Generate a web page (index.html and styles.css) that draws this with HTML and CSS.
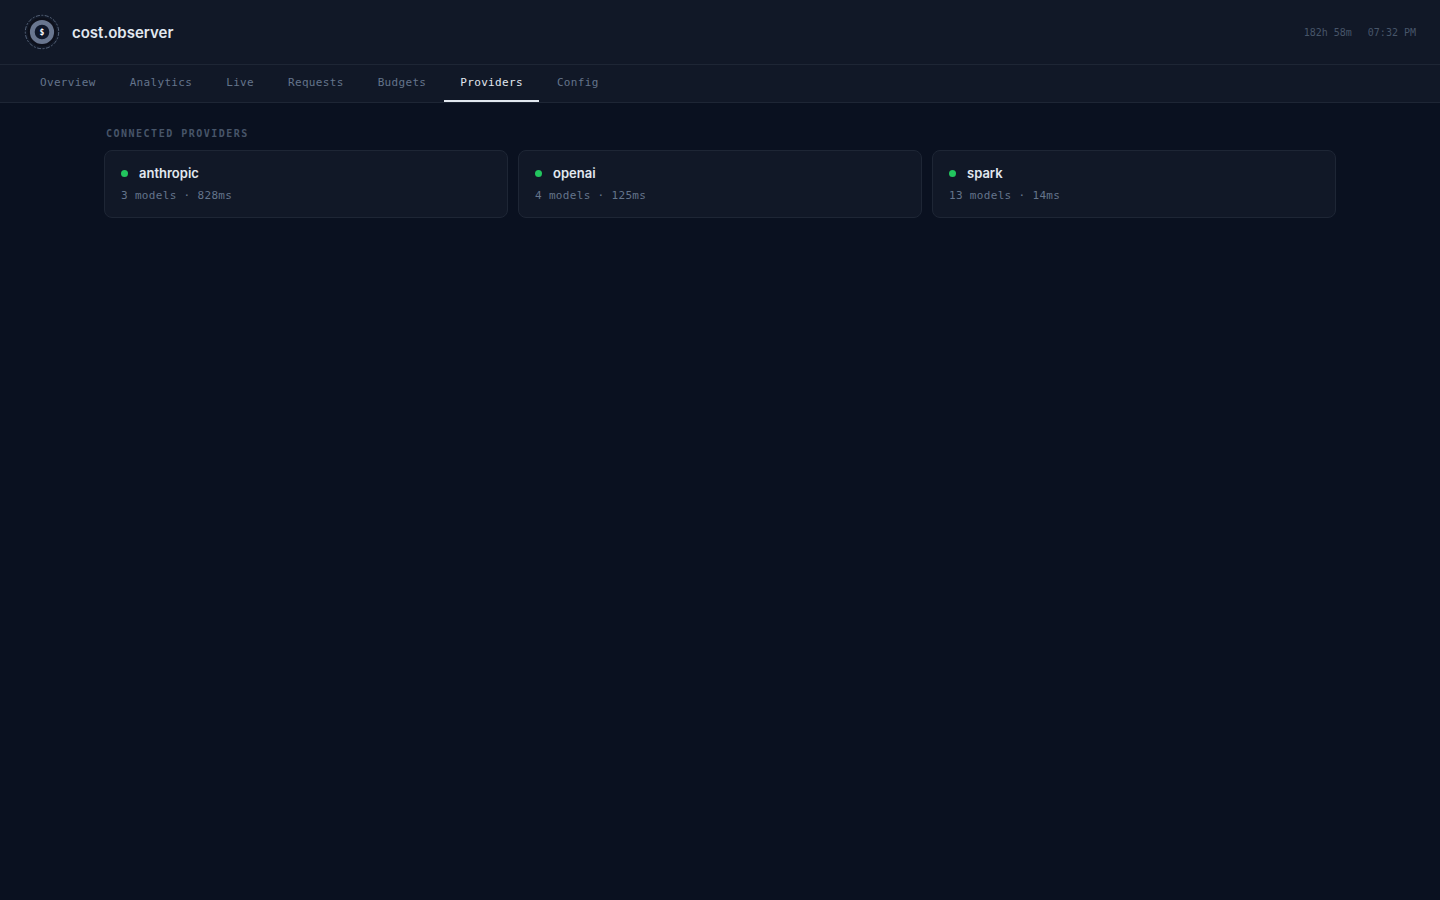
FILE: index.html
```html
<!DOCTYPE html>
<html lang="en">
<head>
    <meta charset="UTF-8">
    <meta name="viewport" content="width=device-width, initial-scale=1.0">
    <title>cost.observer</title>
    <link rel="stylesheet" href="styles.css">
</head>
<body>
    <header class="header">
        <div class="brand">
            <svg class="logo" viewBox="0 0 36 36" aria-hidden="true">
                <circle cx="18" cy="18" r="14.5" fill="#0d101b"/>
                <circle cx="18" cy="18" r="16.7" fill="none" stroke="#64748b" stroke-width="0.8" stroke-dasharray="4 1.5 2 1.5"/>
                <circle cx="18" cy="18" r="9.7" fill="#0f172a" stroke="#69768f" stroke-width="4.8"/>
                <text class="logo-sign" x="18" y="21" text-anchor="middle">$</text>
            </svg>
            <h1 class="brand-name">cost.observer</h1>
        </div>
        <div class="status">
            <span id="uptime">182h 58m</span>
            <span id="clock">07:32 PM</span>
        </div>
    </header>

    <nav class="tabs">
        <button type="button" class="tab">Overview</button>
        <button type="button" class="tab">Analytics</button>
        <button type="button" class="tab">Live</button>
        <button type="button" class="tab">Requests</button>
        <button type="button" class="tab">Budgets</button>
        <button type="button" class="tab active">Providers</button>
        <button type="button" class="tab">Config</button>
    </nav>

    <main class="content">
        <h2 class="section-title">Connected Providers</h2>
        <div class="providers">
            <div class="card">
                <div class="card-head"><span class="dot"></span><h3 class="card-name">anthropic</h3></div>
                <p class="card-meta">3 models · 828ms</p>
            </div>
            <div class="card">
                <div class="card-head"><span class="dot"></span><h3 class="card-name">openai</h3></div>
                <p class="card-meta">4 models · 125ms</p>
            </div>
            <div class="card">
                <div class="card-head"><span class="dot"></span><h3 class="card-name">spark</h3></div>
                <p class="card-meta">13 models · 14ms</p>
            </div>
        </div>
    </main>
</body>
</html>
```
FILE: styles.css
```css
:root {
    --bg: #0a1120;
    --surface: #111827;
    --border: #1e2635;
    --text: #e2e8f0;
    --muted: #64748b;
    --dim: #475569;
    --green: #22c55e;
    --sans: "Inter", "Liberation Sans", sans-serif;
    --mono: "DejaVu Sans Mono", "Liberation Mono", monospace;
}

* {
    box-sizing: border-box;
    margin: 0;
    padding: 0;
}

body {
    min-height: 100vh;
    background: var(--bg);
    color: var(--text);
    font-family: var(--sans);
}

/* header */
.header {
    display: flex;
    align-items: center;
    justify-content: space-between;
    padding: 14px 24px;
    background: var(--surface);
    border-bottom: 1px solid var(--border);
}

.brand {
    display: flex;
    align-items: center;
    gap: 12px;
}

.logo {
    width: 36px;
    height: 36px;
}

.logo-sign {
    font: bold 8px var(--mono);
    fill: #fff;
}

.brand-name {
    font-size: 15px;
    font-weight: 600;
    line-height: 22px;
    padding-top: 2px;
}

.status {
    display: flex;
    gap: 16px;
    padding-top: 2px;
    font: 10px/16px var(--mono);
    color: var(--dim);
}

/* tabs */
.tabs {
    display: flex;
    gap: 2px;
    padding: 0 24px;
    background: var(--surface);
    border-bottom: 1px solid var(--border);
}

.tab {
    padding: 10px 16px;
    background: none;
    border: 0;
    border-bottom: 2px solid transparent;
    color: var(--muted);
    font: 11px/15px var(--mono);
    letter-spacing: 0.03em;
    cursor: pointer;
}

.tab:hover {
    color: var(--text);
}

.tab.active {
    color: var(--text);
    border-bottom-color: var(--text);
}

/* providers */
.content {
    max-width: 1280px;
    margin: 0 auto;
    padding: 24px;
}

.section-title {
    padding: 0 2px;
    margin-bottom: 9px;
    font: 600 10px/14px var(--mono);
    letter-spacing: 0.15em;
    text-transform: uppercase;
    color: var(--dim);
}

.providers {
    display: grid;
    grid-template-columns: repeat(auto-fit, minmax(280px, 1fr));
    gap: 10px;
}

.card {
    padding: 14px 16px;
    background: var(--surface);
    border: 1px solid var(--border);
    border-radius: 8px;
}

.card-head {
    display: flex;
    align-items: center;
    gap: 11px;
    margin-bottom: 8px;
}

.dot {
    width: 7px;
    height: 7px;
    border-radius: 50%;
    background: var(--green);
}

.card-name {
    font-size: 13px;
    font-weight: 600;
    line-height: 16px;
}

.card-meta {
    font: 11px/14px var(--mono);
    letter-spacing: 0.03em;
    color: var(--muted);
}
```
